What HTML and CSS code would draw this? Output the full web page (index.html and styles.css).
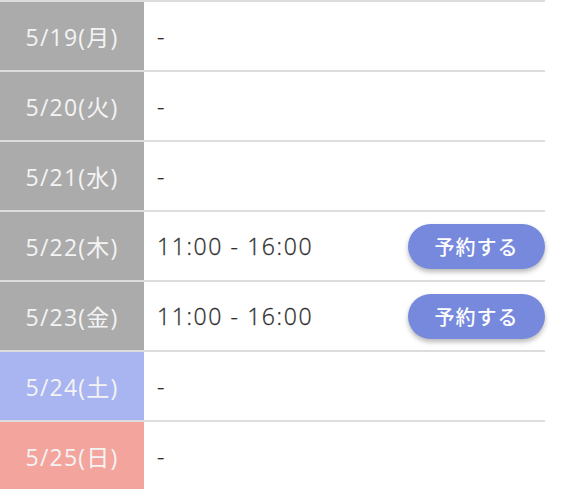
FILE: index.html
```html
<!DOCTYPE html>
<html lang="ja">
<head>
<meta charset="utf-8">
<link rel="stylesheet" href="styles.css">
</head>
<body>
<div class="table">
  <div class="row"><div class="date weekday">5/19(月)</div><div class="slot"><span class="time">-</span></div></div>
  <div class="row"><div class="date weekday">5/20(火)</div><div class="slot"><span class="time">-</span></div></div>
  <div class="row"><div class="date weekday">5/21(水)</div><div class="slot"><span class="time">-</span></div></div>
  <div class="row"><div class="date weekday">5/22(木)</div><div class="slot"><span class="time">11:00 - 16:00</span><button class="reserve">予約する</button></div></div>
  <div class="row"><div class="date weekday">5/23(金)</div><div class="slot"><span class="time">11:00 - 16:00</span><button class="reserve">予約する</button></div></div>
  <div class="row"><div class="date saturday">5/24(土)</div><div class="slot"><span class="time">-</span></div></div>
  <div class="row"><div class="date sunday">5/25(日)</div><div class="slot"><span class="time">-</span></div></div>
</div>
</body>
</html>
```
FILE: styles.css
```css
html, body {
  margin: 0;
  padding: 0;
  background: #ffffff;
}
body {
  font-family: "Noto Sans CJK JP", "Noto Sans", sans-serif;
  overflow: hidden;
}
.table {
  width: 545px;
  border-top: 2px solid #dddddd;
}
.row {
  display: flex;
  height: 68px;
  border-bottom: 2px solid #dddddd;
}
.date {
  width: 144px;
  flex: none;
  display: flex;
  align-items: center;
  justify-content: center;
  color: #f4f4f4;
  font-family: "Open Sans", "Noto Sans CJK JP", sans-serif;
  font-size: 23px;
  font-weight: 400;
  letter-spacing: 1.2px;
}
.weekday { background: #ababab; }
.saturday { background: #a9b5f1; }
.sunday { background: #f3a59d; }
.slot {
  flex: 1;
  display: flex;
  align-items: center;
  justify-content: space-between;
  padding-left: 13px;
}
.time {
  font-family: "Open Sans", "Noto Sans", sans-serif;
  font-size: 23px;
  color: #2e2e2e;
  font-weight: 300;
  letter-spacing: 1.6px;
  -webkit-text-stroke: 0.3px #2e2e2e;
}
.reserve {
  width: 137px;
  height: 45px;
  border: none;
  border-radius: 23px;
  background: #7689dd;
  color: #ffffff;
  font-family: "Noto Sans CJK JP", sans-serif;
  font-size: 20px;
  font-weight: 500;
  letter-spacing: 1px;
  box-shadow: 0 3px 5px rgba(0, 0, 0, 0.28);
  padding: 0;
}
```
